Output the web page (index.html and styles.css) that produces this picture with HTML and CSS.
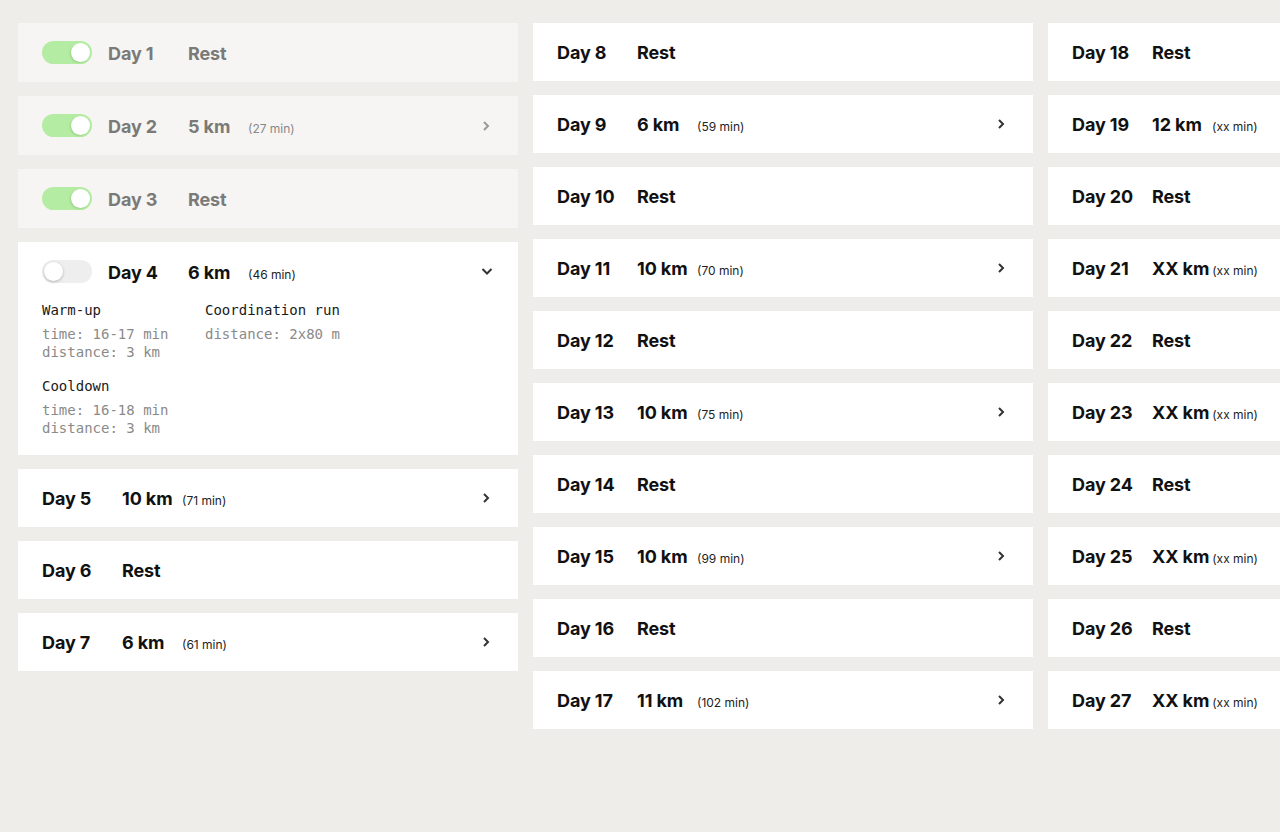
FILE: index.html
```html
<!DOCTYPE html>
<html>
<head>
<meta charset="utf-8">
<link rel="stylesheet" href="styles.css">
</head>
<body>
<main class="board">
  <section class="col">
    <div class="card done"><div class="row"><span class="toggle on"><span class="knob"></span></span><span class="day">Day 1</span><span class="dist">Rest</span></div></div>
    <div class="card done"><div class="row"><span class="toggle on"><span class="knob"></span></span><span class="day">Day 2</span><span class="dist">5 km</span><span class="time">(27 min)</span><svg class="chev" width="10" height="12" viewBox="0 0 10 12"><path d="M3 2l4 4-4 4" fill="none" stroke="currentColor" stroke-width="2"/></svg></div></div>
    <div class="card done"><div class="row"><span class="toggle on"><span class="knob"></span></span><span class="day">Day 3</span><span class="dist">Rest</span></div></div>
    <div class="card open">
      <div class="row"><span class="toggle"><span class="knob"></span></span><span class="day">Day 4</span><span class="dist">6 km</span><span class="time">(46 min)</span><svg class="chev down" width="12" height="10" viewBox="0 0 12 10"><path d="M1.5 3l4.5 4.5 4.5-4.5" fill="none" stroke="currentColor" stroke-width="2"/></svg></div>
      <div class="details">
        <div class="seg"><div class="seg-title">Warm-up</div><div class="seg-info">time: 16-17 min<br>distance: 3 km</div></div>
        <div class="seg"><div class="seg-title">Coordination run</div><div class="seg-info">distance: 2x80 m</div></div>
        <div class="seg"><div class="seg-title">Cooldown</div><div class="seg-info">time: 16-18 min<br>distance: 3 km</div></div>
      </div>
    </div>
    <div class="card"><div class="row"><span class="day">Day 5</span><span class="dist">10 km</span><span class="time">(71 min)</span><svg class="chev" width="10" height="12" viewBox="0 0 10 12"><path d="M3 2l4 4-4 4" fill="none" stroke="currentColor" stroke-width="2"/></svg></div></div>
    <div class="card"><div class="row"><span class="day">Day 6</span><span class="dist">Rest</span></div></div>
    <div class="card"><div class="row"><span class="day">Day 7</span><span class="dist">6 km</span><span class="time">(61 min)</span><svg class="chev" width="10" height="12" viewBox="0 0 10 12"><path d="M3 2l4 4-4 4" fill="none" stroke="currentColor" stroke-width="2"/></svg></div></div>
  </section>
  <section class="col">
    <div class="card"><div class="row"><span class="day">Day 8</span><span class="dist">Rest</span></div></div>
    <div class="card"><div class="row"><span class="day">Day 9</span><span class="dist">6 km</span><span class="time">(59 min)</span><svg class="chev" width="10" height="12" viewBox="0 0 10 12"><path d="M3 2l4 4-4 4" fill="none" stroke="currentColor" stroke-width="2"/></svg></div></div>
    <div class="card"><div class="row"><span class="day">Day 10</span><span class="dist">Rest</span></div></div>
    <div class="card"><div class="row"><span class="day">Day 11</span><span class="dist">10 km</span><span class="time">(70 min)</span><svg class="chev" width="10" height="12" viewBox="0 0 10 12"><path d="M3 2l4 4-4 4" fill="none" stroke="currentColor" stroke-width="2"/></svg></div></div>
    <div class="card"><div class="row"><span class="day">Day 12</span><span class="dist">Rest</span></div></div>
    <div class="card"><div class="row"><span class="day">Day 13</span><span class="dist">10 km</span><span class="time">(75 min)</span><svg class="chev" width="10" height="12" viewBox="0 0 10 12"><path d="M3 2l4 4-4 4" fill="none" stroke="currentColor" stroke-width="2"/></svg></div></div>
    <div class="card"><div class="row"><span class="day">Day 14</span><span class="dist">Rest</span></div></div>
    <div class="card"><div class="row"><span class="day">Day 15</span><span class="dist">10 km</span><span class="time">(99 min)</span><svg class="chev" width="10" height="12" viewBox="0 0 10 12"><path d="M3 2l4 4-4 4" fill="none" stroke="currentColor" stroke-width="2"/></svg></div></div>
    <div class="card"><div class="row"><span class="day">Day 16</span><span class="dist">Rest</span></div></div>
    <div class="card"><div class="row"><span class="day">Day 17</span><span class="dist">11 km</span><span class="time">(102 min)</span><svg class="chev" width="10" height="12" viewBox="0 0 10 12"><path d="M3 2l4 4-4 4" fill="none" stroke="currentColor" stroke-width="2"/></svg></div></div>
  </section>
  <section class="col">
    <div class="card"><div class="row"><span class="day">Day 18</span><span class="dist">Rest</span></div></div>
    <div class="card"><div class="row"><span class="day">Day 19</span><span class="dist">12 km</span><span class="time">(xx min)</span></div></div>
    <div class="card"><div class="row"><span class="day">Day 20</span><span class="dist">Rest</span></div></div>
    <div class="card"><div class="row"><span class="day">Day 21</span><span class="dist">XX km</span><span class="time">(xx min)</span></div></div>
    <div class="card"><div class="row"><span class="day">Day 22</span><span class="dist">Rest</span></div></div>
    <div class="card"><div class="row"><span class="day">Day 23</span><span class="dist">XX km</span><span class="time">(xx min)</span></div></div>
    <div class="card"><div class="row"><span class="day">Day 24</span><span class="dist">Rest</span></div></div>
    <div class="card"><div class="row"><span class="day">Day 25</span><span class="dist">XX km</span><span class="time">(xx min)</span></div></div>
    <div class="card"><div class="row"><span class="day">Day 26</span><span class="dist">Rest</span></div></div>
    <div class="card"><div class="row"><span class="day">Day 27</span><span class="dist">XX km</span><span class="time">(xx min)</span></div></div>
  </section>
</main>
</body>
</html>
```
FILE: styles.css
```css
html, body {
  margin: 0;
  padding: 0;
  background: #eeede9;
  overflow: hidden;
  font-family: Inter, "Noto Sans", sans-serif;
  color: #111;
}
.board {
  display: flex;
  gap: 15px;
  padding: 23px 18px;
  align-items: flex-start;
}
.col {
  flex: 0 0 500px;
  display: flex;
  flex-direction: column;
  gap: 14px;
}
.card {
  background: #fff;
}
.card.done {
  background: #f6f5f3;
  color: #7a7a78;
}
.row {
  height: 58px;
  display: flex;
  align-items: baseline;
  padding: 2px 27px 0 24px;
  box-sizing: border-box;
}
.done .row, .open .row {
  height: 59px;
}
.row > * {
  align-self: baseline;
}
.day, .dist {
  font-size: 18px;
  font-weight: 700;
  line-height: 56px;
  letter-spacing: -0.1px;
}
.done .day, .open .day, .done .dist, .open .dist {
  line-height: 57px;
}
.day {
  width: 80px;
  flex: none;
}
.dist {
  min-width: 57px;
  margin-right: 3px;
}
.time {
  font-size: 12px;
  font-weight: 400;
  color: #222;
}
.done .time {
  color: #888;
}
.chev {
  margin-left: auto;
  margin-top: -2px;
  align-self: center !important;
  color: #333;
}
.done .chev {
  color: #999;
}
.chev.down {
  margin-top: -4px;
  margin-right: -2px;
}
.toggle {
  align-self: center !important;
  margin-top: -2px;
  width: 50px;
  height: 23px;
  border-radius: 12px;
  background: #eeeeee;
  margin-right: 16px;
  display: flex;
  align-items: center;
  padding: 0 2px;
  box-sizing: border-box;
  flex: none;
}
.toggle.on {
  background: #b5eca3;
  justify-content: flex-end;
}
.knob {
  width: 19px;
  height: 19px;
  border-radius: 50%;
  background: #fff;
  box-shadow: 0 1px 3px rgba(0,0,0,0.25);
}
.toggle.on .knob {
  box-shadow: -1px 1px 2px rgba(80,140,60,0.25);
}
.details {
  display: grid;
  grid-template-columns: 163px 1fr;
  row-gap: 16px;
  padding: 0 24px 18px;
  font-family: "DejaVu Sans Mono", monospace;
  font-size: 14px;
  line-height: 18px;
}
.seg-title {
  color: #1a1a1a;
  margin-bottom: 6px;
}
.seg-info {
  color: #8a8a8a;
}
```
